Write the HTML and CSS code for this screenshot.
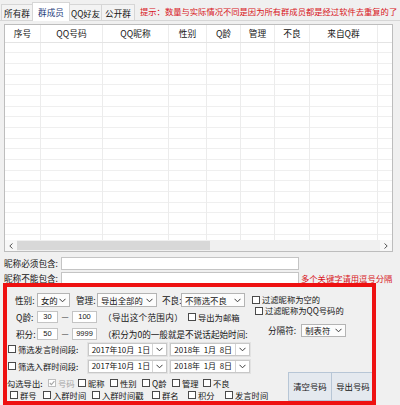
FILE: index.html
```html
<!DOCTYPE html>
<html lang="zh-CN">
<head>
<meta charset="utf-8">
<title>群成员</title>
<link rel="stylesheet" href="styles.css">
</head>
<body>
<div class="tabbar">
  <div class="tab t1">所有群</div>
  <div class="tab t2 active">群成员</div>
  <div class="tab t3">QQ好友</div>
  <div class="tab t4">公开群</div>
  <div class="hint">提示：数量与实际情况不同是因为所有群成员都是经过软件去重复的了</div>
</div>

<div class="list">
  <div class="cols head">
    <div class="c">序号</div>
    <div class="c">QQ号码</div>
    <div class="c">QQ昵称</div>
    <div class="c">性别</div>
    <div class="c">Q龄</div>
    <div class="c">管理</div>
    <div class="c">不良</div>
    <div class="c">来自Q群</div>
    <div class="c last"></div>
  </div>
  <div class="cols rows">
    <div class="c"></div><div class="c"></div><div class="c"></div><div class="c"></div><div class="c"></div><div class="c"></div><div class="c"></div><div class="c"></div><div class="c last"></div>
  </div>
  <div class="hscroll">
    <div class="sbtn"><svg width="4" height="6" viewBox="0 0 4 6"><polyline points="3.5,0.5 0.8,3 3.5,5.5" fill="none" stroke="#555" stroke-width="1"/></svg></div>
    <div class="thumb"></div>
    <div class="track"></div>
    <div class="sbtn"><svg width="4" height="6" viewBox="0 0 4 6"><polyline points="0.5,0.5 3.2,3 0.5,5.5" fill="none" stroke="#555" stroke-width="1"/></svg></div>
  </div>
</div>

<div class="frow f1">
  <span class="flbl">昵称必须包含:</span>
  <div class="field"></div>
</div>
<div class="frow f2">
  <span class="flbl">昵称不能包含:</span>
  <div class="field"></div>
  <span class="note">多个关键字请用逗号分隔</span>
</div>

<div class="lower">
  <div class="left">
    <div class="orow r1">
      <span class="lbl lw22">性别:</span>
      <div class="combo w33"><span>女的</span><svg class="chev" width="7" height="5" viewBox="0 0 7 5"><polyline points="0.5,0.8 3.5,3.8 6.5,0.8" fill="none" stroke="#3a3a3a" stroke-width="1"/></svg></div>
      <span class="lbl lw21 ml6">管理:</span>
      <div class="combo w60"><span>导出全部的</span><svg class="chev" width="7" height="5" viewBox="0 0 7 5"><polyline points="0.5,0.8 3.5,3.8 6.5,0.8" fill="none" stroke="#3a3a3a" stroke-width="1"/></svg></div>
      <span class="lbl lw19 ml5">不良:</span>
      <div class="combo w64"><span>不筛选不良</span><svg class="chev" width="7" height="5" viewBox="0 0 7 5"><polyline points="0.5,0.8 3.5,3.8 6.5,0.8" fill="none" stroke="#3a3a3a" stroke-width="1"/></svg></div>
    </div>
    <div class="orow r2">
      <span class="lbl lw21">Q龄:</span>
      <div class="num w21">30</div>
      <span class="dash">—</span>
      <div class="num w25">100</div>
      <span class="range">（导出这个范围内）</span>
      <label class="chk"><span class="box"></span>导出为邮箱</label>
    </div>
    <div class="orow r3">
      <span class="lbl lw21">积分:</span>
      <div class="num w21">50</div>
      <span class="dash">—</span>
      <div class="num w25">9999</div>
      <span class="range">（积分为0的一般就是不说话起始时间:</span>
    </div>
    <div class="orow r4">
      <label class="chk span81"><span class="box"></span>筛选发言时间段:</label>
      <div class="picker"><span class="ptext">2017年10月&nbsp;&nbsp;1日</span><span class="pbtn"><svg width="7" height="5" viewBox="0 0 7 5"><polyline points="0.5,0.8 3.5,3.8 6.5,0.8" fill="none" stroke="#3a3a3a" stroke-width="1"/></svg></span></div>
      <div class="picker ml3"><span class="ptext">2018年&nbsp;&nbsp;1月&nbsp;&nbsp;8日</span><span class="pbtn"><svg width="7" height="5" viewBox="0 0 7 5"><polyline points="0.5,0.8 3.5,3.8 6.5,0.8" fill="none" stroke="#3a3a3a" stroke-width="1"/></svg></span></div>
    </div>
    <div class="orow r5">
      <label class="chk span81"><span class="box"></span>筛选入群时间段:</label>
      <div class="picker"><span class="ptext">2017年10月&nbsp;&nbsp;1日</span><span class="pbtn"><svg width="7" height="5" viewBox="0 0 7 5"><polyline points="0.5,0.8 3.5,3.8 6.5,0.8" fill="none" stroke="#3a3a3a" stroke-width="1"/></svg></span></div>
      <div class="picker ml3"><span class="ptext">2018年&nbsp;&nbsp;1月&nbsp;&nbsp;8日</span><span class="pbtn"><svg width="7" height="5" viewBox="0 0 7 5"><polyline points="0.5,0.8 3.5,3.8 6.5,0.8" fill="none" stroke="#3a3a3a" stroke-width="1"/></svg></span></div>
    </div>
    <div class="orow r6">
      <span class="lbl lw41">勾选导出:</span>
      <div class="checks g6">
        <label class="chk off"><span class="box"><svg width="6" height="6" viewBox="0 0 6 6"><polyline points="0.8,3 2.4,4.6 5.4,1.2" fill="none" stroke="#a8a8a8" stroke-width="1.1"/></svg></span>号码</label>
        <label class="chk"><span class="box"></span>昵称</label>
        <label class="chk"><span class="box"></span>性别</label>
        <label class="chk"><span class="box"></span>Q龄</label>
        <label class="chk"><span class="box"></span>管理</label>
        <label class="chk"><span class="box"></span>不良</label>
      </div>
    </div>
    <div class="orow r7">
      <div class="checks g7">
        <label class="chk"><span class="box"></span>群号</label>
        <label class="chk"><span class="box"></span>入群时间</label>
        <label class="chk"><span class="box"></span>入群时间戳</label>
        <label class="chk"><span class="box"></span>群名</label>
        <label class="chk"><span class="box"></span>积分</label>
        <label class="chk"><span class="box"></span>发言时间</label>
      </div>
    </div>
  </div>
  <div class="right">
    <label class="chk cb-a"><span class="box"></span>过滤昵称为空的</label>
    <label class="chk cb-b"><span class="box"></span>过滤昵称为QQ号码的</label>
    <div class="sep">
      <span class="lbl">分隔符:</span>
      <div class="combo w45"><span>制表符</span><svg class="chev" width="7" height="5" viewBox="0 0 7 5"><polyline points="0.5,0.8 3.5,3.8 6.5,0.8" fill="none" stroke="#3a3a3a" stroke-width="1"/></svg></div>
    </div>
    <div class="btns">
      <div class="btn">清空号码</div>
      <div class="btn">导出号码</div>
    </div>
  </div>
</div>

<div class="redbox"></div>
</body>
</html>
```

FILE: styles.css
```css
* { box-sizing: border-box; }
html, body { margin: 0; padding: 0; }
body {
  width: 400px;
  height: 405px;
  overflow: hidden;
  position: relative;
  background: #f0f0f0;
  font-family: "Noto Sans CJK SC", "Noto Sans", sans-serif;
  font-size: 8.6px;
  line-height: 1;
  color: #151515;
}

/* tabs */
.tabbar {
  display: flex;
  align-items: flex-end;
  height: 21px;
  padding-left: 1px;
  border-bottom: 1px solid #d6d6d6;
}
.tab {
  height: 16px;
  margin-right: -1px;
  display: flex;
  align-items: center;
  justify-content: center;
  padding-top: 1px;
  border: 1px solid #d6d6d6;
  border-bottom: none;
  background: #f3f3f3;
  white-space: nowrap;
}
.t1 { width: 32px; }
.t2 { width: 38px; }
.t3 { width: 33px; font-size: 8.3px; }
.t4 { width: 34px; }
.tab.active {
  height: 19px;
  margin-bottom: -1px;
  padding-top: 0;
  background: #fff;
  color: #1a3778;
  position: relative;
  z-index: 1;
}
.hint {
  align-self: flex-start;
  margin: 7px 0 0 6px;
  font-size: 8.3px;
  color: #d8141a;
  white-space: nowrap;
}

/* list view */
.list {
  margin: 3px 0 0 4px;
  width: 389px;
  height: 228px;
  border: 1px solid #bdbdbd;
  background: #fff;
  display: flex;
  flex-direction: column;
}
.cols {
  display: grid;
  grid-template-columns: 36px 62px 66px 38px 34px 34px 35px 68px 1fr;
}
.cols .c { border-right: 1px solid #ececec; }
.cols .c.last { border-right: none; }
.head {
  height: 18px;
  border-bottom: 1px solid #e4e4e4;
}
.head .c {
  display: flex;
  align-items: center;
  justify-content: center;
  padding-top: 2px;
  font-size: 8.7px;
}
.rows {
  flex: 1;
  background: repeating-linear-gradient(to bottom,
    transparent 0, transparent 9px, #efefef 9px, #efefef 10px,
    transparent 10px, transparent 20px, #efefef 20px, #efefef 21px,
    transparent 21px, transparent 31px, #efefef 31px, #efefef 32px);
}
.hscroll {
  height: 11px;
  display: flex;
  background: #f0f0f0;
}
.sbtn {
  width: 12px;
  display: flex;
  align-items: center;
  justify-content: center;
  background: #f7f7f7;
}
.thumb { width: 193px; background: #d8d8d8; margin: 1px 0; }
.track { flex: 1; }

/* keyword filters */
.frow {
  display: flex;
  align-items: center;
  height: 15px;
  padding-left: 4px;
}
.f1 { margin-top: 4px; }
.flbl { width: 57px; flex: none; white-space: nowrap; }
.field {
  width: 238px;
  height: 13px;
  flex: none;
  background: #fff;
  border: 1px solid #c4c4c4;
}
.note {
  margin-left: 2px;
  color: #d8141a;
  font-size: 8.3px;
  white-space: nowrap;
}

/* lower options */
.lower {
  display: flex;
  padding-top: 5px;
}
.left { width: 250px; flex: none; }
.right {
  flex: 1;
  display: flex;
  flex-direction: column;
  align-items: flex-start;
}
.orow {
  display: flex;
  align-items: center;
  white-space: nowrap;
}
.r1 { height: 18px; padding-left: 15px; }
.r2 { height: 16px; padding-left: 16px; }
.r3 { height: 18px; padding-left: 16px; }
.r4 { height: 13px; padding-left: 8px; }
.r5 { height: 20px; padding-left: 8px; }
.r6 { height: 14px; padding-left: 7px; }
.r7 { height: 10px; padding-left: 10px; }

.lbl { white-space: nowrap; }
.lw19 { width: 19px; }
.lw21 { width: 21px; }
.lw22 { width: 22px; }
.lw41 { width: 41px; font-size: 8.3px; }
.ml3 { margin-left: 3px; }
.ml5 { margin-left: 5px; }
.ml6 { margin-left: 6px; }

.combo {
  height: 14px;
  display: flex;
  align-items: center;
  justify-content: space-between;
  padding: 0 3px 0 3px;
  background: #fcfcfc;
  border: 1px solid #b4b4b4;
  font-size: 8.4px;
}
.chev { flex: none; }
.w33 { width: 33px; }
.w45 { width: 45px; height: 13px; }
.w60 { width: 60px; }
.w64 { width: 64px; }

.num {
  height: 12px;
  display: flex;
  align-items: center;
  justify-content: center;
  background: #fff;
  border: 1px solid #c4c4c4;
  font-family: "Liberation Sans", sans-serif;
  font-size: 7.5px;
}
.w21 { width: 21px; }
.w25 { width: 25px; }
.dash {
  width: 14px;
  text-align: center;
  font-size: 8px;
}
.range {
  margin-left: 6px;
  width: 85px;
  letter-spacing: 0.3px;
}
.r3 .range { width: auto; letter-spacing: 0; }

.chk {
  display: flex;
  align-items: center;
  white-space: nowrap;
  font-size: 8.3px;
}
.box {
  width: 8px;
  height: 8px;
  flex: none;
  margin-right: 2px;
  background: #fff;
  border: 1px solid #4a4a4a;
  display: flex;
  align-items: center;
  justify-content: center;
}
.chk.off { color: #a6a6a6; }
.chk.off .box { border-color: #bdbdbd; }
.span81 { width: 81px; }

.picker {
  width: 81px;
  height: 13px;
  display: flex;
  align-items: center;
  background: #fff;
  border: 1px solid #c8c8c8;
  outline: 1px solid #e2e2e2;
  font-size: 8px;
}
.ptext { flex: 1; padding-left: 3px; white-space: nowrap; }
.pbtn {
  width: 14px;
  height: 100%;
  display: flex;
  align-items: center;
  justify-content: center;
  border-left: 1px solid #d4d4d4;
}

.checks { display: grid; align-items: center; }
.g6 { grid-template-columns: 30px 32px 32px 30px 31px auto; }
.g7 { grid-template-columns: 33px 49px 60px 36px 37px auto; }

.cb-a { margin: 3px 0 0 2px; height: 11px; }
.cb-b { margin-left: 5px; height: 11px; }
.sep {
  display: flex;
  align-items: center;
  gap: 5px;
  margin: 7px 0 0 18px;
  height: 14px;
}
.btns {
  display: flex;
  margin: 35px 0 0 38px;
}
.btn {
  width: 44px;
  height: 29px;
  display: flex;
  align-items: center;
  justify-content: center;
  background: #e4e9ef;
  border: 1px solid #b7c6d6;
  margin-right: -1px;
  font-size: 8.4px;
}

/* red annotation frame drawn over the options panel */
.redbox {
  position: absolute;
  left: 3px;
  top: 283px;
  width: 373px;
  height: 122px;
  border: 4px solid #ee1111;
  pointer-events: none;
}
```
